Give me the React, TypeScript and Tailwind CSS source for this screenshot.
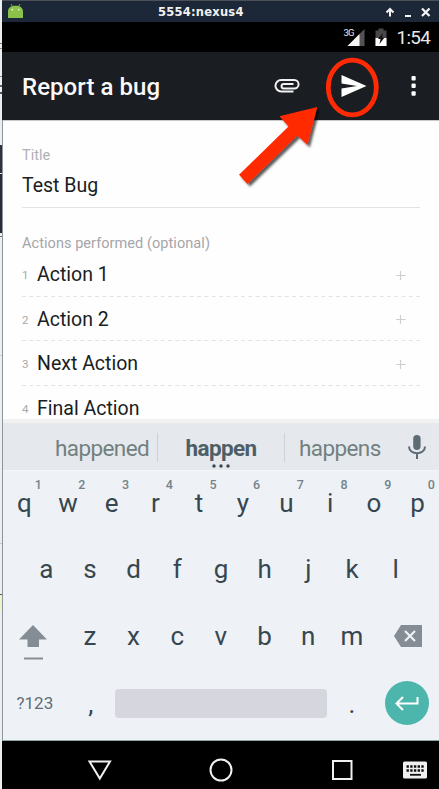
import React from "react";

const topKeys = ["q", "w", "e", "r", "t", "y", "u", "i", "o", "p"];
const homeKeys = ["a", "s", "d", "f", "g", "h", "j", "k", "l"];
const bottomKeys = ["z", "x", "c", "v", "b", "n", "m"];
const actions = ["Action 1", "Action 2", "Next Action", "Final Action"];

function TitleBar() {
  return (
    <div className="flex h-[21px] shrink-0 items-center rounded-tl-[5px] bg-[#1c2838] pl-[6px] pr-[8px]">
      <svg width="15" height="16" viewBox="0 0 15 16" className="mb-[1px] shrink-0">
        <path d="M3 1l1.6 3M12 1l-1.6 3" stroke="#7fae45" strokeWidth="0.9" />
        <path d="M0 15V8.5C0 4.800 3 2.800 7.500 2.800S15 4.800 15 8.500V15z" fill="#8bc34a" />
        <circle cx="4.300" cy="6.700" r="0.900" fill="#e3f2cf" />
        <circle cx="10.700" cy="6.700" r="0.900" fill="#e3f2cf" />
      </svg>
      <span className="flex-1 pl-[135px] font-['DejaVu_Sans',sans-serif] text-[11.500px] leading-[20px] font-bold tracking-[0.240px] whitespace-nowrap text-[#f1f1f1]">
        5554:nexus4
      </span>
      <svg width="46" height="12" viewBox="0 0 46 12" className="shrink-0" fill="none" stroke="#f3f3f3" strokeWidth="2">
        <path d="M5 10.500V3.500M1.500 6.500L5 3L8.500 6.500" />
        <path d="M20 10h6" />
        <path d="M37 2.500l7.500 7.500M44.500 2.500L37 10" strokeWidth="2.300" />
      </svg>
    </div>
  );
}

function StatusBar() {
  return (
    <div className="flex h-[30px] shrink-0 items-center justify-end bg-black pr-[9px]">
      <svg width="46" height="20" viewBox="0 0 46 20">
        <text x="0.500" y="8.500" fill="#e6e6e6" fontFamily="Roboto, sans-serif" fontSize="9.500" textLength="11">3G</text>
        <path d="M4.500 19L21.500 2V19z" fill="#555055" />
        <path d="M4.500 19L16.500 7V19z" fill="#f4f4f4" />
        <path d="M35.500 1.500h5v2h3V19h-11V3.500h3z" fill="#4a464a" />
        <path d="M32.500 11h11v8h-11z" fill="#fff" />
        <path d="M40 6l-5 6h2.500l-1 5 5-6.500H39z" fill="#111" />
      </svg>
      <span className="pt-[2px] pl-[8px] text-[18.800px] leading-[28px] tracking-[-0.700px] text-[#e8e8e8]">1:54</span>
    </div>
  );
}

function AppBar() {
  return (
    <div className="flex h-[68px] shrink-0 items-center bg-[#1a1d22] pl-[20px] pr-[23px]">
      <h1 className="flex-1 pt-[2px] text-[24px] leading-[66px] font-medium tracking-[0.050px] whitespace-nowrap text-[#fafafa]">Report a bug</h1>
      <svg width="26" height="16" viewBox="0 0 26 16" fill="none" stroke="#f1f1f1" strokeWidth="2" className="mr-[41px]">
        <path d="M19.500 13.500H7.200A5.700 5.700 0 017.200 2H20.300a4.200 4.200 0 010 8.500H9.800a2.200 2.200 0 010-4.500H19.500" />
      </svg>
      <svg width="26" height="22" viewBox="0 0 26 22" fill="#fff" className="mr-[44px]">
        <path d="M0.500 0L25.500 11L0.500 22V13.500L16 11L0.500 8.500z" />
      </svg>
      <svg width="5" height="20" viewBox="0 0 5 20" fill="#fff">
        <rect x="0.500" width="4.200" height="4.600" rx="1" />
        <rect x="0.500" y="7.500" width="4.200" height="4.600" rx="1" />
        <rect x="0.500" y="15.200" width="4.200" height="4.600" rx="1" />
      </svg>
    </div>
  );
}

function Dashes() {
  return (
    <svg width="398" height="1" className="block">
      <path d="M0 .5H398" stroke="#e3e3e1" strokeDasharray="3.900 3.400" />
    </svg>
  );
}

function BugForm() {
  return (
    <div className="h-[299px] shrink-0 overflow-hidden border-t border-[#c9c9c9] bg-[#fefefe] pl-[20px]">
      <div className="mt-[25px] h-[20px] text-[14.500px] leading-[20px] text-[#b0b0b5]">Title</div>
      <div className="mt-[7px] h-[24px] text-[19.500px] leading-[25px] text-[#1a1d22]">Test Bug</div>
      <div className="mt-[10px] h-px w-[398px] bg-[#e2e2e0]" />
      <div className="mt-[26px] h-[20px] text-[14.500px] leading-[20px] tracking-[0.060px] text-[#a5a5aa]">
        Actions performed (optional)
      </div>
      <div className="mt-[-2px]">
        {actions.map((action, index) => (
          <div key={action}>
            <div className="flex h-[43.500px] w-[398px] items-center">
              <span className="w-[15px] pt-[3px] text-[11.500px] leading-[20px] text-[#a8a8ad]">{index + 1}</span>
              <span className="flex-1 pt-[2px] text-[19.500px] leading-[41px] text-[#1a1d22]">{action}</span>
              {index < 3 && (
                <svg width="10" height="10" className="mt-[2px] mr-[14px]">
                  <path d="M0 5.500h9.500M4.500 1v9" stroke="#cfcfd3" strokeWidth="1.200" />
                </svg>
              )}
            </div>
            <Dashes />
          </div>
        ))}
      </div>
    </div>
  );
}

function Suggestions() {
  return (
    <div className="flex h-[51px] shrink-0 items-center border-t-4 border-[#f1f1f1] bg-[#e5e9ed] pt-[1px] text-[22.500px] leading-[46px] tracking-[-0.600px] text-[#72807f]">
      <span className="w-[155px] pt-[2px] pl-[53px]">happened</span>
      <span className="h-[29px] w-px bg-[#cdd2d5]" />
      <span className="relative w-[126px] pt-[2px] text-center font-bold text-[#4e5e67]">
        happen
        <svg width="18" height="4" className="absolute bottom-[3px] left-[54px]" fill="#37474f">
          <circle cx="2" cy="2" r="1.700" />
          <circle cx="9" cy="2" r="1.700" />
          <circle cx="16" cy="2" r="1.700" />
        </svg>
      </span>
      <span className="h-[29px] w-px bg-[#cdd2d5]" />
      <span className="w-[123px] pt-[2px] pl-[14px]">happens</span>
      <svg width="18" height="24" viewBox="0 0 18 24">
        <rect x="5.200" y="0" width="7.400" height="15" rx="3.700" fill="#5d6c74" />
        <path d="M1 11.500c0 9 16 9 16 0M9 18v6" stroke="#5d6c74" strokeWidth="2" fill="none" />
      </svg>
    </div>
  );
}

function Key({ label, hint }: { label: string; hint?: string }) {
  return (
    <div className="relative w-[43.700px] pl-[1px] text-center text-[26px] leading-[65px] text-[#37474f]">
      {label}
      {hint && (
        <span className="absolute top-[6px] right-0 w-[15px] text-center text-[12.500px] leading-[15px] font-medium text-[#74828a]">
          {hint}
        </span>
      )}
    </div>
  );
}

function Keyboard() {
  return (
    <div className="h-[270px] shrink-0 border-t border-[#f3f6f9] bg-[#eef2f7]">
      <div className="flex h-[66px]">
        {topKeys.map((key, index) => (
          <Key key={key} label={key} hint={String((index + 1) % 10)} />
        ))}
      </div>
      <div className="flex h-[67px] justify-center">
        {homeKeys.map((key) => (
          <Key key={key} label={key} />
        ))}
      </div>
      <div className="flex h-[67px]">
        <div className="w-[65.500px] pt-[21px] pl-[17px]">
          <svg width="28" height="36" viewBox="0 0 28 36" fill="#858d94">
            <path d="M14 0L28 14.500H20V22H8.500V14.500H0z" />
            <rect x="5" y="32.500" width="19" height="2" />
          </svg>
        </div>
        {bottomKeys.map((key) => (
          <Key key={key} label={key} />
        ))}
        <div className="pt-[21px] pl-[21px]">
          <svg width="28" height="22" viewBox="0 0 28 22">
            <path d="M7 0H27.500Q28 0 28 .5V21.500Q28 22 27.500 22H7L0 11z" fill="#858d94" />
            <path d="M11 6l10 10M21 6L11 16" stroke="#eef2f7" strokeWidth="2.200" />
          </svg>
        </div>
      </div>
      <div className="flex h-[69px] text-[#37474f]">
        <span className="w-[65.500px] pl-[14.500px] text-[17px] leading-[65px] text-[#5f6e75]">?123</span>
        <span className="w-[47.500px] pr-[1px] text-center text-[26px] leading-[66px]">,</span>
        <span className="mt-[18px] h-[29px] w-[212px] rounded-[4px] bg-[#d5d6de]" />
        <span className="w-[50px] text-center text-[26px] leading-[66px]">.</span>
        <span className="mt-[10px] ml-[8px] flex h-[44px] w-[44px] items-center justify-center rounded-full bg-[#4db6ac]">
          <svg width="24" height="15" viewBox="0 0 24 15" fill="none" stroke="#fff" strokeWidth="2">
            <path d="M22.500 1V7.500H2M8 1L1.500 7.500L8 14" />
          </svg>
        </span>
      </div>
    </div>
  );
}

function NavigationBar() {
  return (
    <div className="flex h-[49px] shrink-0 items-center border-t border-[#8fa6a6] bg-black pt-[9px]">
      <svg width="437" height="30" viewBox="0 0 437 30" fill="none" stroke="#f0f0f0" strokeWidth="2">
        <path d="M87.500 6.500H108L97.800 23.500z" />
        <circle cx="219" cy="15" r="10.500" />
        <rect x="331" y="6" width="18.500" height="18" />
        <rect x="401" y="6.500" width="24" height="17" rx="1.500" fill="#f0f0f0" stroke="none" />
        <path d="M404.500 11.500h17.500M404.500 15.500h17.500" stroke="#111" strokeDasharray="2.400 1.300" strokeWidth="2.400" />
        <path d="M408 19.800h11" stroke="#111" strokeWidth="1.800" />
      </svg>
    </div>
  );
}

function Callout() {
  return (
    <svg width="439" height="200" className="pointer-events-none absolute top-0 left-0 overflow-visible">
      <defs>
        <filter id="arrow-shadow" x="-20%" y="-20%" width="150%" height="150%">
          <feDropShadow dx="2.500" dy="2.500" stdDeviation="1.200" floodColor="#000" floodOpacity="0.650" />
        </filter>
      </defs>
      <ellipse cx="352.300" cy="87.500" rx="24" ry="27.300" fill="none" stroke="#ff2b05" strokeWidth="4.800" />
      <path d="M317.300 107L279.500 116.300L288.500 126.500L239 174.800L247.500 184L297.500 135.500L307.300 145z" fill="#ff2b05" filter="url(#arrow-shadow)" />
    </svg>
  );
}

export default function App() {
  return (
    <div className="relative flex h-[789px] w-[439px] overflow-hidden bg-[#535d68] font-[Roboto,sans-serif]">
      <div className="flex w-[2px] shrink-0 flex-col bg-[#eeeeee]">
        <div className="h-[43px]" />
        <div className="h-px bg-[#777777]" />
        <div className="mt-[4px] h-px bg-[#888888]" />
        <div className="mt-[27px] h-px bg-[#888888]" />
        <div className="mt-[8px] h-[2px] bg-[#666666]" />
        <div className="mt-[5px] h-[2px] bg-[#555555]" />
        <div className="mt-[51px] h-[28px] bg-[#333136]" />
        <div className="mt-px h-[59px] bg-[#2d2b31]" />
        <div className="mt-[3px] h-px bg-[#777777]" />
        <div className="mt-[118px] h-px bg-[#e6bfc4]" />
        <div className="mt-[187px] h-px bg-[#e6bfc4]" />
        <div className="mt-[50px] h-px bg-[#555555]" />
        <div className="h-[16px] bg-[#f2f2c8]" />
      </div>
      <div className="flex flex-1 flex-col border-t border-[#4b5058] bg-[#1c2838]">
        <TitleBar />
        <StatusBar />
        <AppBar />
        <div className="relative flex flex-col">
          <BugForm />
          <Suggestions />
          <Keyboard />
          <div className="absolute inset-y-0 left-0 w-px bg-[#8996a2]" />
        </div>
        <NavigationBar />
      </div>
      <Callout />
    </div>
  );
}
